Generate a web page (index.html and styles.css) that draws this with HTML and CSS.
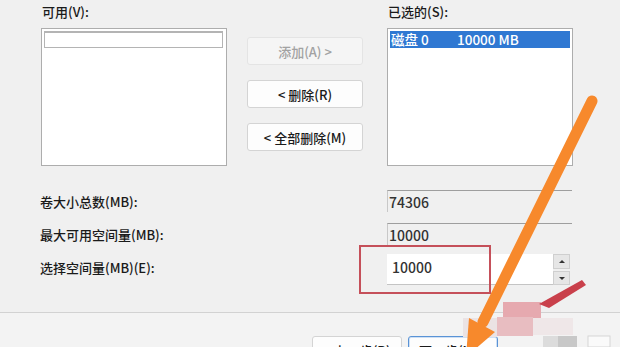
FILE: index.html
```html
<!DOCTYPE html>
<html lang="zh-CN">
<head>
    <meta charset="UTF-8">
    <title>新建简单卷</title>
    <link rel="stylesheet" href="styles.css">
</head>
<body>
<div class="dialog">

    <div class="picker">
        <div class="col">
            <div class="cap">可用(V):</div>
            <div class="list">
                <div class="item empty"></div>
            </div>
        </div>

        <div class="moves">
            <button class="btn" disabled>添加(A) &gt;</button>
            <button class="btn">&lt; 删除(R)</button>
            <button class="btn">&lt; 全部删除(M)</button>
        </div>

        <div class="col right">
            <div class="cap">已选的(S):</div>
            <div class="list">
                <div class="item sel"><span class="disk">磁盘 0</span><span>10000 MB</span></div>
            </div>
        </div>
    </div>

    <div class="sizes">
        <div class="row r1">
            <span class="lbl">卷大小总数(MB):</span>
            <div class="field">74306</div>
        </div>
        <div class="row r2">
            <span class="lbl">最大可用空间量(MB):</span>
            <div class="field">10000</div>
        </div>
        <div class="row r3">
            <span class="lbl">选择空间量(MB)(E):</span>
            <div class="spin">
                <div class="spin-edit">10000</div>
                <div class="spin-btns">
                    <span class="up"></span>
                    <span class="down"></span>
                </div>
            </div>
        </div>
    </div>

    <div class="sep"></div>

    <div class="footer">
        <button class="btn foot">&lt; 上一步(B)</button>
        <button class="btn foot primary">下一步(N) &gt;</button>
    </div>

    <!-- annotations drawn on top of the screenshot -->
    <div class="redbox"></div>
    <svg class="marks" width="620" height="347" viewBox="0 0 620 347">
        <rect x="503" y="302" width="38" height="16" fill="#e6a9af"/>
        <rect x="497" y="317" width="36" height="19" fill="#e8bdc1"/>
        <rect x="463" y="318" width="34" height="19" fill="#ebe3e4"/>
        <rect x="533" y="318" width="40" height="17" fill="#efe7e8"/>
        <rect x="543" y="336" width="15" height="11" fill="#dcdcdc"/>
        <rect x="558" y="336" width="19" height="11" fill="#c8c8c8"/>
        <rect x="588" y="336" width="22" height="11" fill="#fafafa" stroke="#d6d6d6"/>
        <polygon points="582,280 586,285 549,308 539,304" fill="#c9404b"/>
        <line x1="592" y1="101" x2="483" y2="322" stroke="#f7892c" stroke-width="11" stroke-linecap="round"/>
        <polygon points="466,357 495,332 469,318" fill="#f7892c"/>
    </svg>
</div>
</body>
</html>
```

FILE: styles.css
```css
body { margin: 0; background: #f0f0f0; font-family: "Noto Sans CJK SC", "Noto Sans", sans-serif; font-size: 13px; font-weight: 500; color: #1a1a1a; }
.dialog { position: relative; width: 620px; height: 347px; overflow: hidden; }

.picker { display: flex; padding: 3px 0 0 41px; }
.col { width: 186px; }
.col.right { margin-left: 24px; }
.cap { height: 18px; line-height: 18px; margin-bottom: 7px; padding-left: 1px; }
.list { height: 138px; box-sizing: border-box; border: 1px solid #adadad; background: #fff; padding: 2px; }
.item { height: 17px; box-sizing: border-box; line-height: 16px; }
.item.empty { border: 1px solid #b4b4b4; border-top-width: 2px; margin-right: 1px; }
.item.sel { display: flex; background: #2f78d2; color: #fff; padding-left: 1px; font-size: 13.5px; }
.item .disk { width: 66px; flex: none; }

.moves { display: flex; flex-direction: column; gap: 15px; margin: 34px 0 0 20px; }
.btn { width: 116px; height: 28px; box-sizing: border-box; border: 1px solid #d4d4d4; border-radius: 3px; background: #fdfdfd; font: inherit; color: #1a1a1a; padding: 0; }
.btn:disabled { background: #f5f5f5; border-color: #e4e4e4; color: #a2a2a2; }

.sizes { margin-top: 24px; }
.row { display: flex; align-items: center; padding-left: 40px; }
.row.r1 { height: 22px; margin-bottom: 11px; }
.row.r2 { height: 22px; margin-bottom: 9px; }
.row.r3 { height: 31px; }
.lbl { width: 347px; }
.row.r3 .lbl { margin-top: -5px; }
.field { width: 185px; height: 22px; box-sizing: border-box; border-top: 1px solid #9e9e9e; border-left: 1px solid #c8c8c8; padding: 1px 0 0 1px; font-size: 14px; line-height: 20px; color: #333; }

.spin { display: flex; width: 183px; height: 31px; }
.spin-edit { flex: 1; background: #fff; border-bottom: 1px solid #c4c4c4; padding-left: 5px; font-size: 14px; line-height: 27px; color: #333; }
.spin-btns { width: 17px; display: flex; flex-direction: column; gap: 2px; }
.spin-btns span { flex: 1; background: #e6e6e6; border: 1px solid #cfcfcf; position: relative; }
.spin-btns span::after { content: ""; position: absolute; left: 5px; border-left: 3px solid transparent; border-right: 3px solid transparent; }
.spin-btns .up::after { top: 5px; border-bottom: 3px solid #333; }
.spin-btns .down::after { top: 5px; border-top: 3px solid #333; }

.sep { height: 1px; background: #d2d2d2; margin-top: 27px; }

.footer { display: flex; gap: 6px; padding: 23px 0 0 312px; background: #f3f3f3; height: 40px; }
.btn.foot { width: 90px; }
.btn.foot.primary { border: 1px solid #5a93d6; box-shadow: inset 0 0 0 1px #cfe0f4; }

.redbox { position: absolute; left: 359px; top: 245px; width: 132px; height: 49px; box-sizing: border-box; border: 2px solid #c5505a; }
.marks { position: absolute; left: 0; top: 0; }
```
